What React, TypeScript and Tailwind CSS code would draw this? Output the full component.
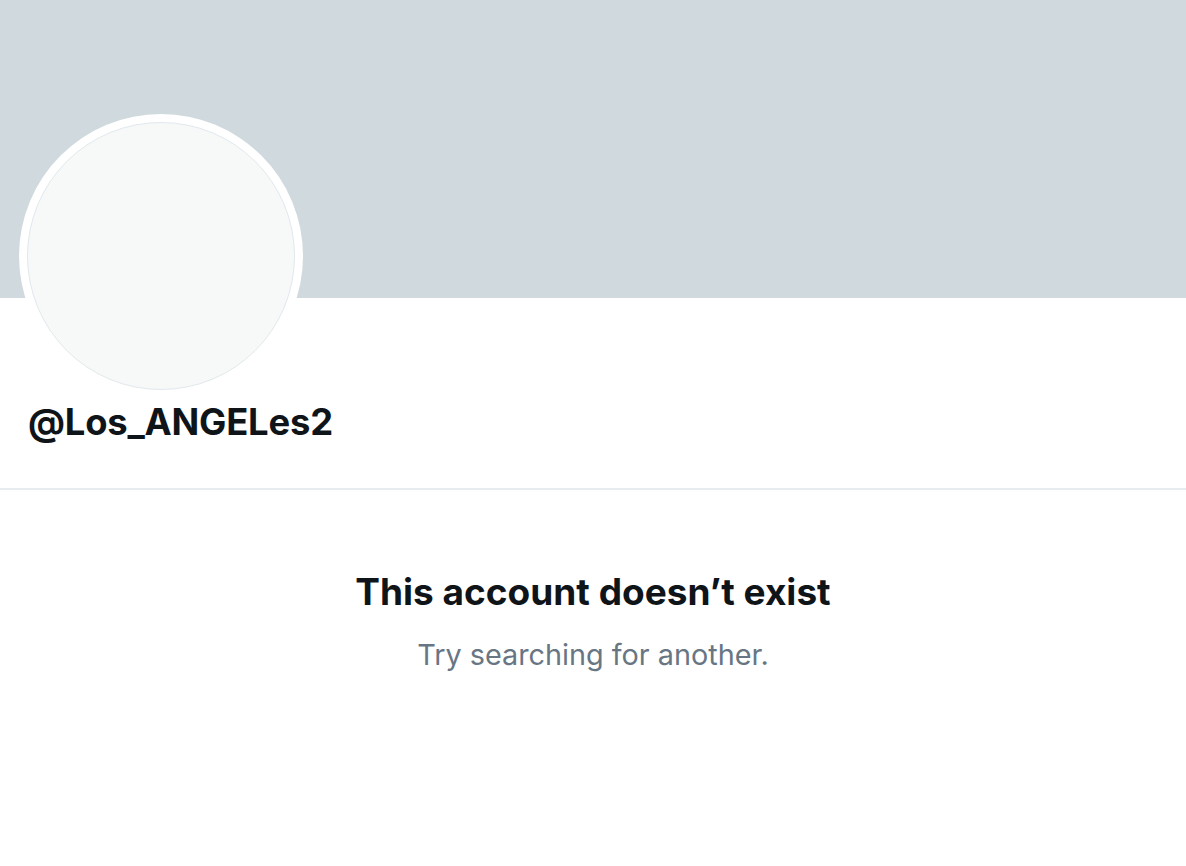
export default function App() {
  return (
    <div className="w-[1186px] h-[866px] bg-white overflow-hidden" style={{ fontFamily: 'Inter, "Liberation Sans", sans-serif' }}>
      <div className="h-[298px] bg-[#cfd9de]"></div>
      <div className="px-[19px]">
        <div className="-mt-[184px] w-[284px] h-[284px] rounded-full bg-white p-[8px]">
          <div className="w-full h-full rounded-full bg-[#f7f9f9] border border-[#e1e8ed]"></div>
        </div>
        <div className="pl-[9px] text-[36.4px] font-bold leading-[48px] text-[#0f1419] tracking-[-0.2px]">@Los_ANGELes2</div>
      </div>
      <div className="mt-[42px] h-[2px] bg-[#e6ecf0]"></div>
      <div className="flex flex-col items-center pt-[80px]">
        <div className="text-[37px] font-bold leading-[44px] text-[#0f1419]">This account doesn’t exist</div>
        <div className="mt-[23px] text-[28.8px] leading-[36px] text-[#687684]">Try searching for another.</div>
      </div>
    </div>
  );
}
